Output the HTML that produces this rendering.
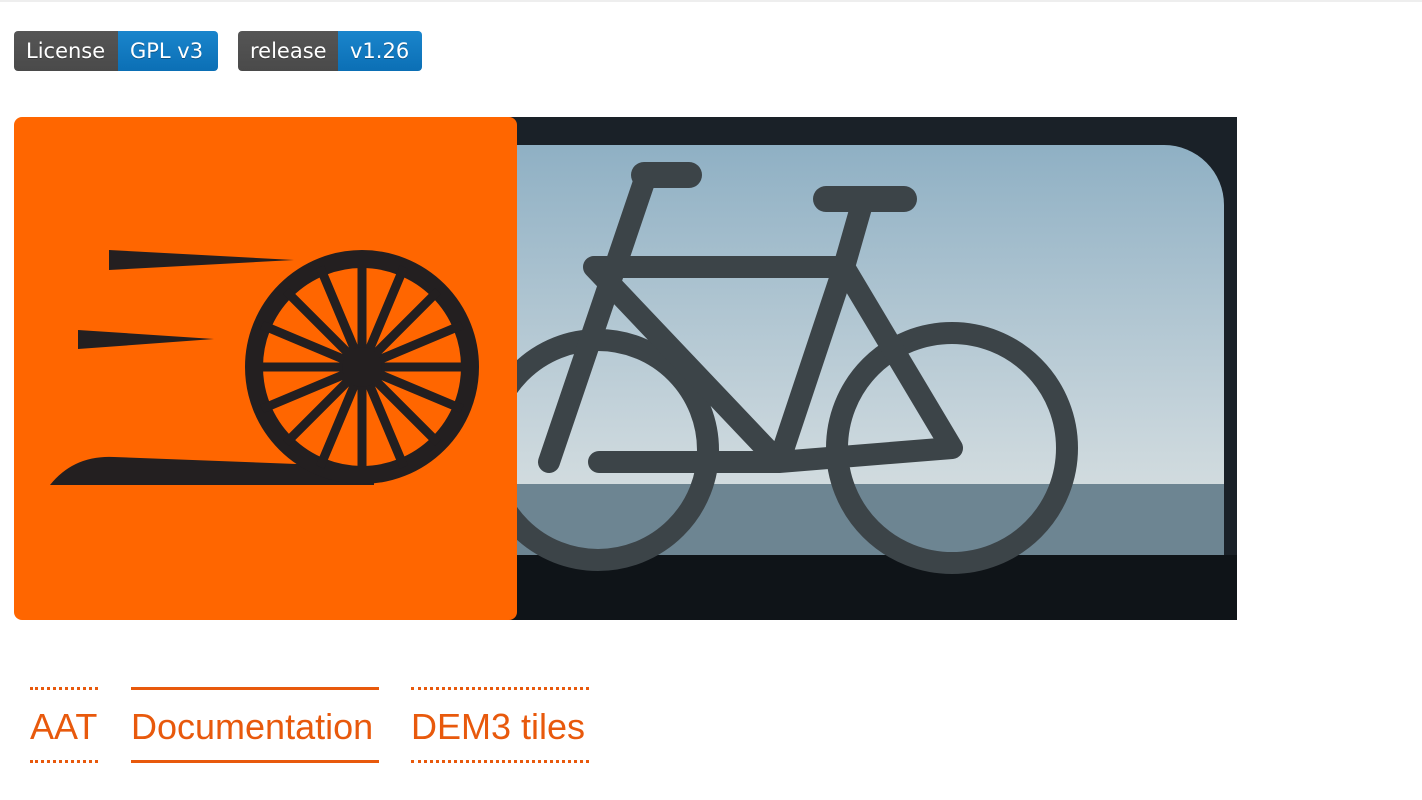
<!DOCTYPE html>
<html><head><style>
body{margin:0;background:#fff;width:1422px;height:800px;overflow:hidden;font-family:"Liberation Sans",sans-serif;position:relative}
.top{position:absolute;top:0;left:0;width:1422px;height:2px;background:#eee}
.b{position:absolute;top:31px;height:40px;display:flex;border-radius:4px;overflow:hidden;font-family:"DejaVu Sans",sans-serif;font-size:21px;color:#fff;line-height:40px;text-shadow:0 1px 0 rgba(0,0,0,.3)}
.b span{padding:0 8px 0 12px}
.g{background:linear-gradient(#555,#4a4a4a)}
.bl{background:linear-gradient(#1a85cc,#0b6fb5)}
.n{position:absolute;top:687px;height:70px;color:#e8590c;font-size:36px;line-height:74px}
.d{border-top:3px dotted #e8590c;border-bottom:3px dotted #e8590c}
.s{border-top:3px solid #e8590c;border-bottom:3px solid #e8590c}
</style></head><body>
<div class="top"></div>
<div class="b" style="left:14px;width:204px"><span class="g" style="width:84px">License</span><span class="bl" style="flex:1">GPL v3</span></div>
<div class="b" style="left:238px;width:184px"><span class="g" style="width:80px">release</span><span class="bl" style="flex:1">v1.26</span></div>
<svg style="position:absolute;left:14px;top:117px" width="1223" height="503">
<defs><linearGradient id="sky" x1="0" y1="0" x2="0" y2="1"><stop offset="0" stop-color="#8fb0c4"/><stop offset=".7" stop-color="#c9d6dc"/><stop offset="1" stop-color="#dfe4e2"/></linearGradient></defs>
<rect x="480" y="0" width="743" height="503" fill="#1a2128"/>
<rect x="440" y="28" width="770" height="420" rx="60" fill="url(#sky)"/>
<rect x="480" y="367" width="730" height="73" fill="#6d8592"/>
<rect x="480" y="438" width="743" height="65" fill="#0f1418"/>
<g fill="none" stroke="#3c4448" stroke-width="22" stroke-linecap="round" stroke-linejoin="round">
<circle cx="584" cy="333" r="110"/><circle cx="938" cy="331" r="115"/>
<path d="M535 345 L630 65 M580 150 L830 150 L765 345 L585 345 M830 150 L938 331 M830 150 L765 345 M580 150 L765 345 M850 80 L830 150 M765 345 L938 331"/>
<path d="M630 58 L675 58 M812 82 L890 82" stroke-width="26"/>
</g>
<rect x="0" y="0" width="503" height="503" rx="8" fill="#ff6600"/>
<g fill="#231f20">
<path d="M95 133 L280 143 L95 153Z M64 213 L200 222 L64 232Z M36 368 Q60 338 100 340 L360 350 L360 368Z"/>
</g>
<g stroke="#231f20" fill="none">
<circle cx="348" cy="250" r="108" stroke-width="18"/>
<g stroke-width="9"><path d="M348 142V358M240 250H456M272 174L424 326M272 326L424 174M306 150L390 350M306 350L390 150M248 208L448 292M248 292L448 208"/></g>
</g>
<circle cx="348" cy="250" r="20" fill="#231f20"/>
</svg>
<div class="n d" style="left:30px;width:68px">AAT</div>
<div class="n s" style="left:131px;width:248px">Documentation</div>
<div class="n d" style="left:411px;width:178px">DEM3 tiles</div>
</body></html>
